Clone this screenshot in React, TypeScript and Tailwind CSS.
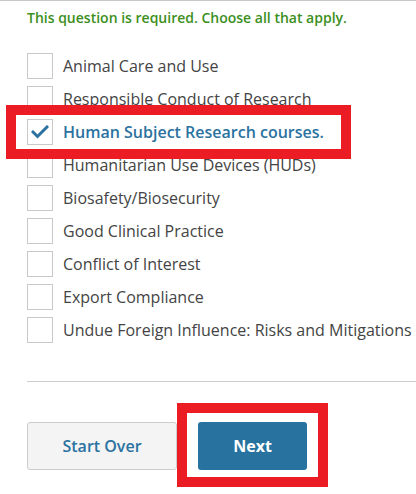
const options = [
  "Animal Care and Use",
  "Responsible Conduct of Research",
  "Human Subject Research courses.",
  "Humanitarian Use Devices (HUDs)",
  "Biosafety/Biosecurity",
  "Good Clinical Practice",
  "Conflict of Interest",
  "Export Compliance",
  "Undue Foreign Influence: Risks and Mitigations",
];

const checkedIndex = 2;

export default function App() {
  return (
    <main
      className="relative h-[494px] w-[416px] overflow-hidden border-t border-[#c8c8c8] bg-white"
      style={{ fontFamily: '"Open Sans", "Liberation Sans", sans-serif' }}
    >
      <div className="pl-[27px]">
        <p className="pt-[7px] text-[14px] leading-[19px] font-semibold text-[#3c8f1c]">
          This question is required. Choose all that apply.
        </p>

        <ul className="mt-[26px] flex flex-col gap-[7px]">
          {options.map((label, i) => {
            const checked = i === checkedIndex;
            return (
              <li key={label} className="flex h-[26px] items-center">
                <span className="flex h-[26px] w-[26px] shrink-0 items-center justify-center border border-[#c9c9c9] bg-white">
                  {checked && (
                    <svg width="18" height="14" viewBox="0 0 18 14" fill="none">
                      <polyline
                        points="2,7 6.5,11.5 16,2"
                        stroke="#2b72a0"
                        strokeWidth="3"
                        strokeLinecap="square"
                      />
                    </svg>
                  )}
                </span>
                <span
                  className={`ml-[10px] whitespace-nowrap text-[16px] leading-[22px] ${
                    checked ? "font-semibold text-[#2b72a0]" : "text-[#444444]"
                  }`}
                >
                  {label}
                </span>
              </li>
            );
          })}
        </ul>

        <div className="mt-[38px] h-px bg-[#cccccc]" />

        <div className="mt-[40px] flex gap-[21px]">
          <button
            type="button"
            className="h-[48px] w-[150px] rounded-[3px] border border-[#cccccc] bg-[#f4f4f4] text-[16px] font-semibold text-[#2b72a0]"
          >
            Start Over
          </button>
          <button
            type="button"
            className="h-[48px] w-[109px] rounded-[3px] bg-[#27729f] text-[16px] font-bold text-white"
          >
            Next
          </button>
        </div>
      </div>

      {/* annotation boxes */}
      <div className="pointer-events-none absolute top-[104px] left-[6px] h-[54px] w-[345px] border-[10px] border-[#ec1c24]" />
      <div className="pointer-events-none absolute top-[402px] left-[177px] h-[84px] w-[151px] border-[10px] border-[#ec1c24]" />
    </main>
  );
}
